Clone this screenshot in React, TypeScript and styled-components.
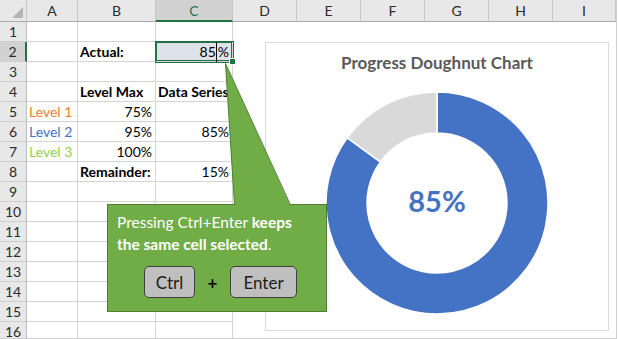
import * as React from 'react'
import styled, { createGlobalStyle, css } from 'styled-components'

const GlobalStyle = createGlobalStyle`
  body {
    margin: 0;
    background: #fff;
  }
`

const green = '#217346'
const gridLine = '#d4d4d4'

const Sheet = styled.div`
  position: relative;
  box-sizing: border-box;
  width: 617px;
  height: 339px;
  overflow: hidden;
  border-right: 1px solid #d0d0d0;
  border-bottom: 1px solid #d0d0d0;
  font-family: Lato, 'Liberation Sans', sans-serif;
  background: #fff;
`

const Grid = styled.div`
  display: grid;
  grid-template-columns: 27px 51px 78px 77px repeat(5, 64px) 63px;
  grid-template-rows: 22px;
  grid-auto-rows: 20px;
`

const HeadBase = css`
  box-sizing: border-box;
  display: flex;
  align-items: center;
  justify-content: center;
  background: #e8e8e8;
  color: #2b2b2b;
  font-size: 14px;
`

const Corner = styled.div`
  ${HeadBase};
  position: relative;
  border-right: 1px solid #c6c6c6;
  border-bottom: 1px solid #ababab;

  &::after {
    content: '';
    position: absolute;
    right: 3px;
    bottom: 3px;
    width: 11px;
    height: 11px;
    background: #b5b5b5;
    clip-path: polygon(100% 0, 100% 100%, 0 100%);
  }
`

const ColHead = styled.div<{ $active?: boolean }>`
  ${HeadBase};
  border-right: 1px solid #c6c6c6;
  border-bottom: 1px solid #ababab;
  ${p =>
    p.$active &&
    css`
      background: #d2d2d2;
      color: ${green};
      border-bottom: 2px solid ${green};
    `}
`

const RowHead = styled.div<{ $active?: boolean }>`
  ${HeadBase};
  border-right: 1px solid #bdbdbd;
  border-bottom: 1px solid #cdcdcd;
  ${p =>
    p.$active &&
    css`
      background: #d2d2d2;
      border-right: 2px solid ${green};
    `}
`

const Cell = styled.div<{
  $align?: 'left' | 'right'
  $bold?: boolean
  $color?: string
  $selected?: boolean
}>`
  position: relative;
  box-sizing: border-box;
  border-right: 1px solid ${gridLine};
  border-bottom: 1px solid ${gridLine};
  padding: 0 3px 0 2px;
  font-size: 14px;
  line-height: 19px;
  white-space: nowrap;
  text-align: ${p => p.$align || 'left'};
  font-weight: ${p => (p.$bold ? 700 : 400)};
  color: ${p => p.$color || '#000'};
  ${p =>
    p.$selected &&
    css`
      z-index: 1;
      background: #dde2ea;
      box-shadow: 0 0 0 1px ${green}, inset 0 0 0 1px ${green};

      &::after {
        content: '';
        position: absolute;
        right: -3px;
        bottom: -3px;
        width: 5px;
        height: 5px;
        background: ${green};
        box-shadow: 0 0 0 1px #fff;
      }
    `}
`

const Blank = styled.div``

const Caret = styled.span`
  display: inline-block;
  width: 1px;
  height: 20px;
  margin: 0 0.5px;
  vertical-align: -5px;
  background: #000;
`

/* chart */

const ChartBox = styled.div`
  position: absolute;
  left: 265px;
  top: 42px;
  box-sizing: border-box;
  width: 344px;
  height: 289px;
  border: 1px solid #d9d9d9;
  background: #fff;
  display: flex;
  flex-direction: column;
  align-items: center;
  padding-top: 9px;
`

const ChartTitle = styled.div`
  font-size: 17px;
  line-height: 22px;
  font-weight: 700;
  color: #595959;
`

const Donut = styled.div`
  display: grid;
  margin-top: 17px;
  width: 224px;
  height: 224px;

  & > * {
    grid-area: 1 / 1;
  }
`

const DonutLabel = styled.div`
  display: flex;
  align-items: center;
  justify-content: center;
  padding-bottom: 6px;
  font-size: 29px;
  font-weight: 700;
  color: #4472c4;
`

/* callout */

const Callout = styled.div`
  position: absolute;
  left: 107px;
  top: 204px;
  z-index: 2;
  box-sizing: border-box;
  width: 220px;
  height: 108px;
  background: #70ad47;
  border: 1px solid #507e32;
`

const Pointer = styled.svg`
  position: absolute;
  left: 117px;
  top: -142px;
  overflow: visible;
`

const CalloutText = styled.div`
  padding: 6px 6px 0 9px;
  font-size: 15.5px;
  line-height: 22px;
  color: #fff;
  white-space: nowrap;

  b {
    font-weight: 700;
  }
`

const KeyRow = styled.div`
  display: flex;
  align-items: center;
  margin-top: 11px;
  padding-left: 36px;
`

const Key = styled.div<{ $w: number }>`
  box-sizing: border-box;
  width: ${p => p.$w}px;
  height: 32px;
  display: flex;
  align-items: center;
  justify-content: center;
  background: #bfbfbf;
  border: 1px solid #404040;
  border-radius: 5px;
  font-size: 17px;
  color: #1c1c1c;
`

const Plus = styled.span`
  width: 35px;
  text-align: center;
  font-size: 17px;
  font-weight: 700;
  color: #000;
`

type CellData = {
  text?: React.ReactNode
  align?: 'left' | 'right'
  bold?: boolean
  color?: string
  selected?: boolean
}

const columns = ['A', 'B', 'C', 'D', 'E', 'F', 'G', 'H', 'I']

const data: Record<number, CellData[]> = {
  2: [
    {},
    { text: 'Actual:', bold: true },
    {
      text: (
        <>
          85<Caret />%
        </>
      ),
      align: 'right',
      selected: true,
    },
  ],
  4: [{}, { text: 'Level Max', bold: true }, { text: 'Data Series', bold: true }],
  5: [{ text: 'Level 1', color: '#ed7d31' }, { text: '75%', align: 'right' }, {}],
  6: [
    { text: 'Level 2', color: '#4472c4' },
    { text: '95%', align: 'right' },
    { text: '85%', align: 'right' },
  ],
  7: [{ text: 'Level 3', color: '#92d050' }, { text: '100%', align: 'right' }, {}],
  8: [{}, { text: 'Remainder:', bold: true }, { text: '15%', align: 'right' }],
}

const arcPath = (start: number, end: number, R: number, r: number, c: number) => {
  const pt = (a: number, rad: number) =>
    `${(c + rad * Math.sin(a)).toFixed(2)} ${(c - rad * Math.cos(a)).toFixed(2)}`
  const large = end - start > Math.PI ? 1 : 0
  return `M${pt(start, R)} A${R} ${R} 0 ${large} 1 ${pt(end, R)} L${pt(end, r)} A${r} ${r} 0 ${large} 0 ${pt(start, r)} Z`
}

const DoughnutChart = ({ value }: { value: number }) => {
  const split = value * Math.PI * 2
  return (
    <ChartBox>
      <ChartTitle>Progress Doughnut Chart</ChartTitle>
      <Donut>
        <svg width="224" height="224" viewBox="0 0 224 224">
          <path d={arcPath(0, split, 111, 70, 112)} fill="#4472c4" stroke="#fff" strokeWidth="1.5" />
          <path d={arcPath(split, Math.PI * 2, 111, 70, 112)} fill="#d9d9d9" stroke="#fff" strokeWidth="1.5" />
        </svg>
        <DonutLabel>{Math.round(value * 100)}%</DonutLabel>
      </Donut>
    </ChartBox>
  )
}

const Tip = () => (
  <Callout>
    <Pointer width="66" height="143" viewBox="0 0 66 143">
      <polygon points="0.5,0.5 9.5,143 65.5,143" fill="#70ad47" />
      <polyline points="9.5,142 0.5,0.5 65.5,142" fill="none" stroke="#507e32" strokeWidth="1" />
    </Pointer>
    <CalloutText>
      Pressing Ctrl+Enter <b>keeps</b>
      <br />
      <b>the same cell selected</b>.
    </CalloutText>
    <KeyRow>
      <Key $w={51}>Ctrl</Key>
      <Plus>+</Plus>
      <Key $w={67}>Enter</Key>
    </KeyRow>
  </Callout>
)

export default function App() {
  const rows = Array.from({ length: 16 }, (_, i) => i + 1)
  return (
    <>
      <GlobalStyle />
      <Sheet>
        <Grid>
          <Corner />
          {columns.map(c => (
            <ColHead key={c} $active={c === 'C'}>
              {c}
            </ColHead>
          ))}
          {rows.map(r => {
            const cells = data[r] || [{}, {}, {}]
            return (
              <React.Fragment key={r}>
                <RowHead $active={r === 2}>{r}</RowHead>
                {cells.map((c, i) => (
                  <Cell
                    key={i}
                    $align={c.align}
                    $bold={c.bold}
                    $color={c.color}
                    $selected={c.selected}
                  >
                    {c.text}
                  </Cell>
                ))}
                {columns.slice(3).map(c => (
                  <Blank key={c} />
                ))}
              </React.Fragment>
            )
          })}
        </Grid>
        <DoughnutChart value={0.85} />
        <Tip />
      </Sheet>
    </>
  )
}
